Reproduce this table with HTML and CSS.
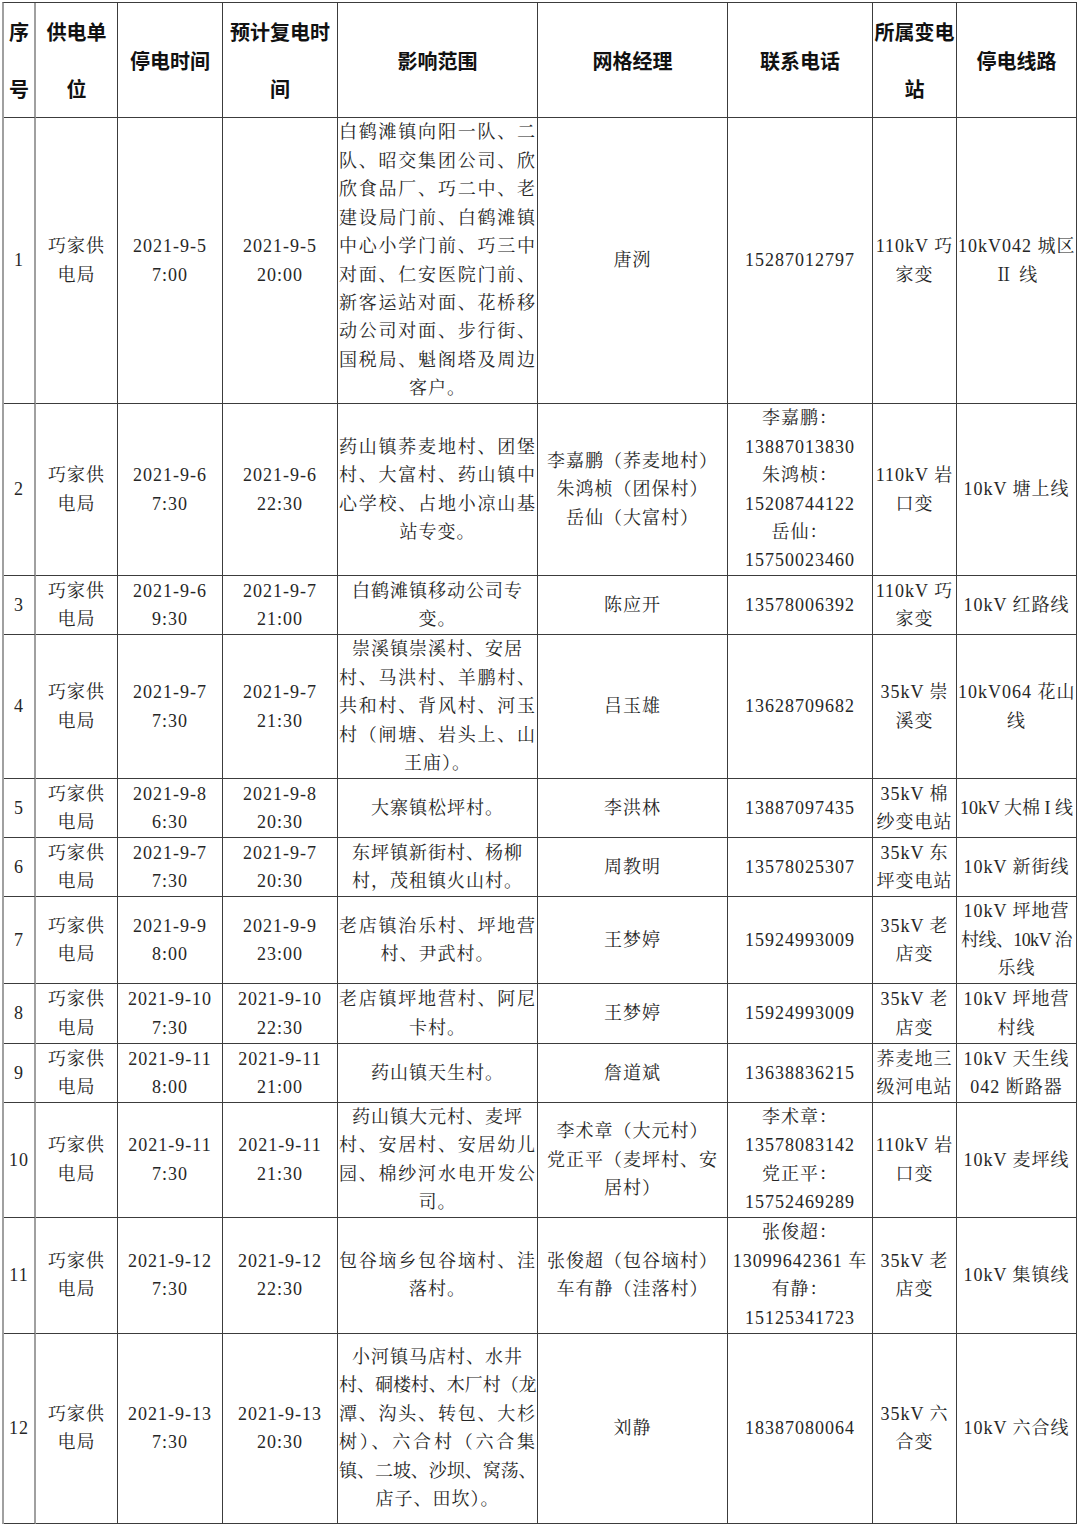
FILE: index.html
```html
<!DOCTYPE html>
<html lang="zh-CN">
<head>
<meta charset="utf-8">
<title>停电计划</title>
<link rel="stylesheet" href="styles.css">
</head>
<body>
<table class="grid">
  <thead>
    <tr class="rh">
      <th class="w1"><span class="l">序</span><span class="l">号</span></th>
      <th class="w2"><span class="l">供电单</span><span class="l">位</span></th>
      <th class="w3"><span class="l">停电时间</span></th>
      <th class="w4"><span class="l">预计复电时</span><span class="l">间</span></th>
      <th class="w5"><span class="l">影响范围</span></th>
      <th class="w6"><span class="l">网格经理</span></th>
      <th class="w7"><span class="l">联系电话</span></th>
      <th class="w8"><span class="l">所属变电</span><span class="l">站</span></th>
      <th class="w9"><span class="l">停电线路</span></th>
    </tr>
  </thead>
  <tbody>
    <tr class="r1">
      <td><span class="l">1</span></td>
      <td><span class="l">巧家供</span><span class="l">电局</span></td>
      <td class="dt"><span class="l">2021-9-5</span><span class="l">7:00</span></td>
      <td class="dt"><span class="l">2021-9-5</span><span class="l">20:00</span></td>
      <td class="area">
        <span class="l j">白鹤滩镇向阳一队、二</span>
        <span class="l j">队、昭交集团公司、欣</span>
        <span class="l j">欣食品厂、巧二中、老</span>
        <span class="l j">建设局门前、白鹤滩镇</span>
        <span class="l j">中心小学门前、巧三中</span>
        <span class="l j">对面、仁安医院门前、</span>
        <span class="l j">新客运站对面、花桥移</span>
        <span class="l j">动公司对面、步行街、</span>
        <span class="l j">国税局、魁阁塔及周边</span>
        <span class="l">客户。</span>
      </td>
      <td><span class="l">唐洌</span></td>
      <td class="ph"><span class="l">15287012797</span></td>
      <td><span class="l">110kV 巧</span><span class="l">家变</span></td>
      <td class="line"><span class="l">10kV042 城区</span><span class="l">Ⅱ 线</span></td>
    </tr>
    <tr class="r2">
      <td><span class="l">2</span></td>
      <td><span class="l">巧家供</span><span class="l">电局</span></td>
      <td class="dt"><span class="l">2021-9-6</span><span class="l">7:30</span></td>
      <td class="dt"><span class="l">2021-9-6</span><span class="l">22:30</span></td>
      <td class="area">
        <span class="l j">药山镇荞麦地村、团堡</span>
        <span class="l j">村、大富村、药山镇中</span>
        <span class="l j">心学校、占地小凉山基</span>
        <span class="l">站专变。</span>
      </td>
      <td><span class="l">李嘉鹏（荞麦地村）</span><span class="l">朱鸿桢（团保村）</span><span class="l">岳仙（大富村）</span></td>
      <td class="ph"><span class="l">李嘉鹏：</span><span class="l">13887013830</span><span class="l">朱鸿桢：</span><span class="l">15208744122</span><span class="l">岳仙：</span><span class="l">15750023460</span></td>
      <td><span class="l">110kV 岩</span><span class="l">口变</span></td>
      <td class="line"><span class="l">10kV 塘上线</span></td>
    </tr>
    <tr class="r3">
      <td><span class="l">3</span></td>
      <td><span class="l">巧家供</span><span class="l">电局</span></td>
      <td class="dt"><span class="l">2021-9-6</span><span class="l">9:30</span></td>
      <td class="dt"><span class="l">2021-9-7</span><span class="l">21:00</span></td>
      <td class="area"><span class="l">白鹤滩镇移动公司专</span><span class="l">变。</span></td>
      <td><span class="l">陈应开</span></td>
      <td class="ph"><span class="l">13578006392</span></td>
      <td><span class="l">110kV 巧</span><span class="l">家变</span></td>
      <td class="line"><span class="l">10kV 红路线</span></td>
    </tr>
    <tr class="r4">
      <td><span class="l">4</span></td>
      <td><span class="l">巧家供</span><span class="l">电局</span></td>
      <td class="dt"><span class="l">2021-9-7</span><span class="l">7:30</span></td>
      <td class="dt"><span class="l">2021-9-7</span><span class="l">21:30</span></td>
      <td class="area">
        <span class="l">崇溪镇崇溪村、安居</span>
        <span class="l j">村、马洪村、羊鹏村、</span>
        <span class="l j">共和村、背风村、河玉</span>
        <span class="l j">村（闸塘、岩头上、山</span>
        <span class="l">王庙）。</span>
      </td>
      <td><span class="l">吕玉雄</span></td>
      <td class="ph"><span class="l">13628709682</span></td>
      <td><span class="l">35kV 崇</span><span class="l">溪变</span></td>
      <td class="line"><span class="l">10kV064 花山</span><span class="l">线</span></td>
    </tr>
    <tr class="r5">
      <td><span class="l">5</span></td>
      <td><span class="l">巧家供</span><span class="l">电局</span></td>
      <td class="dt"><span class="l">2021-9-8</span><span class="l">6:30</span></td>
      <td class="dt"><span class="l">2021-9-8</span><span class="l">20:30</span></td>
      <td class="area"><span class="l">大寨镇松坪村。</span></td>
      <td><span class="l">李洪林</span></td>
      <td class="ph"><span class="l">13887097435</span></td>
      <td><span class="l">35kV 棉</span><span class="l">纱变电站</span></td>
      <td class="line"><span class="l t0">10kV 大棉 I 线</span></td>
    </tr>
    <tr class="r6">
      <td><span class="l">6</span></td>
      <td><span class="l">巧家供</span><span class="l">电局</span></td>
      <td class="dt"><span class="l">2021-9-7</span><span class="l">7:30</span></td>
      <td class="dt"><span class="l">2021-9-7</span><span class="l">20:30</span></td>
      <td class="area"><span class="l">东坪镇新街村、杨柳</span><span class="l">村，茂租镇火山村。</span></td>
      <td><span class="l">周教明</span></td>
      <td class="ph"><span class="l">13578025307</span></td>
      <td><span class="l">35kV 东</span><span class="l">坪变电站</span></td>
      <td class="line"><span class="l">10kV 新街线</span></td>
    </tr>
    <tr class="r7">
      <td><span class="l">7</span></td>
      <td><span class="l">巧家供</span><span class="l">电局</span></td>
      <td class="dt"><span class="l">2021-9-9</span><span class="l">8:00</span></td>
      <td class="dt"><span class="l">2021-9-9</span><span class="l">23:00</span></td>
      <td class="area"><span class="l j">老店镇治乐村、坪地营</span><span class="l">村、尹武村。</span></td>
      <td><span class="l">王梦婷</span></td>
      <td class="ph"><span class="l">15924993009</span></td>
      <td><span class="l">35kV 老</span><span class="l">店变</span></td>
      <td class="line"><span class="l">10kV 坪地营</span><span class="l tn">村线、10kV 治</span><span class="l">乐线</span></td>
    </tr>
    <tr class="r8">
      <td><span class="l">8</span></td>
      <td><span class="l">巧家供</span><span class="l">电局</span></td>
      <td class="dt"><span class="l">2021-9-10</span><span class="l">7:30</span></td>
      <td class="dt"><span class="l">2021-9-10</span><span class="l">22:30</span></td>
      <td class="area"><span class="l j">老店镇坪地营村、阿尼</span><span class="l">卡村。</span></td>
      <td><span class="l">王梦婷</span></td>
      <td class="ph"><span class="l">15924993009</span></td>
      <td><span class="l">35kV 老</span><span class="l">店变</span></td>
      <td class="line"><span class="l">10kV 坪地营</span><span class="l">村线</span></td>
    </tr>
    <tr class="r9">
      <td><span class="l">9</span></td>
      <td><span class="l">巧家供</span><span class="l">电局</span></td>
      <td class="dt"><span class="l">2021-9-11</span><span class="l">8:00</span></td>
      <td class="dt"><span class="l">2021-9-11</span><span class="l">21:00</span></td>
      <td class="area"><span class="l">药山镇天生村。</span></td>
      <td><span class="l">詹道斌</span></td>
      <td class="ph"><span class="l">13638836215</span></td>
      <td><span class="l">荞麦地三</span><span class="l">级河电站</span></td>
      <td class="line"><span class="l">10kV 天生线</span><span class="l">042 断路器</span></td>
    </tr>
    <tr class="r10">
      <td><span class="l">10</span></td>
      <td><span class="l">巧家供</span><span class="l">电局</span></td>
      <td class="dt"><span class="l">2021-9-11</span><span class="l">7:30</span></td>
      <td class="dt"><span class="l">2021-9-11</span><span class="l">21:30</span></td>
      <td class="area">
        <span class="l">药山镇大元村、麦坪</span>
        <span class="l j">村、安居村、安居幼儿</span>
        <span class="l j">园、棉纱河水电开发公</span>
        <span class="l">司。</span>
      </td>
      <td><span class="l">李术章（大元村）</span><span class="l">党正平（麦坪村、安</span><span class="l">居村）</span></td>
      <td class="ph"><span class="l">李术章：</span><span class="l">13578083142</span><span class="l">党正平：</span><span class="l">15752469289</span></td>
      <td><span class="l">110kV 岩</span><span class="l">口变</span></td>
      <td class="line"><span class="l">10kV 麦坪线</span></td>
    </tr>
    <tr class="r11">
      <td><span class="l">11</span></td>
      <td><span class="l">巧家供</span><span class="l">电局</span></td>
      <td class="dt"><span class="l">2021-9-12</span><span class="l">7:30</span></td>
      <td class="dt"><span class="l">2021-9-12</span><span class="l">22:30</span></td>
      <td class="area"><span class="l j">包谷垴乡包谷垴村、洼</span><span class="l">落村。</span></td>
      <td><span class="l">张俊超（包谷垴村）</span><span class="l">车有静（洼落村）</span></td>
      <td class="ph"><span class="l">张俊超：</span><span class="l">13099642361 车</span><span class="l">有静：</span><span class="l">15125341723</span></td>
      <td><span class="l">35kV 老</span><span class="l">店变</span></td>
      <td class="line"><span class="l">10kV 集镇线</span></td>
    </tr>
    <tr class="r12">
      <td><span class="l">12</span></td>
      <td><span class="l">巧家供</span><span class="l">电局</span></td>
      <td class="dt"><span class="l">2021-9-13</span><span class="l">7:30</span></td>
      <td class="dt"><span class="l">2021-9-13</span><span class="l">20:30</span></td>
      <td class="area">
        <span class="l">小河镇马店村、水井</span>
        <span class="l j tn">村、硐楼村、木厂村（龙</span>
        <span class="l j">潭、沟头、转包、大杉</span>
        <span class="l j">树）、六合村（六合集</span>
        <span class="l j tn">镇、二坡、沙坝、窝荡、</span>
        <span class="l">店子、田坎）。</span>
      </td>
      <td><span class="l">刘静</span></td>
      <td class="ph"><span class="l">18387080064</span></td>
      <td><span class="l">35kV 六</span><span class="l">合变</span></td>
      <td class="line"><span class="l">10kV 六合线</span></td>
    </tr>
  </tbody>
</table>
</body>
</html>
```

FILE: styles.css
```css
html, body {
  margin: 0;
  padding: 0;
  background: #ffffff;
}

body {
  padding: 2px 0 0 2px;
}

.grid {
  border-collapse: separate;
  border-spacing: 0;
  table-layout: fixed;
  width: 1073px;
  border-top: 1px solid #3c3c3c;
  border-left: 2px solid #a0a0a0;
  font-family: "Liberation Serif", "Noto Serif CJK SC", "Noto Sans CJK SC", serif;
  font-size: 18px;
  color: #262626;
}

.grid th,
.grid td {
  box-sizing: border-box;
  border-right: 1px solid #3c3c3c;
  border-bottom: 1px solid #3c3c3c;
  padding: 0 1px;
  text-align: center;
  vertical-align: middle;
  line-height: 28.4px;
  letter-spacing: 1px;
  white-space: nowrap;
  overflow: visible;
}

.grid th:first-child,
.grid td:first-child {
  border-right: 2px solid #a0a0a0;
}

.grid th {
  font-family: "Noto Sans CJK SC", "Liberation Sans", sans-serif;
  font-weight: 700;
  font-size: 20px;
  line-height: 57px;
  letter-spacing: 0;
  color: #111111;
}

.l {
  display: block;
}

.j {
  text-align: justify;
  text-align-last: justify;
}

.tn {
  letter-spacing: -0.6px;
}

.t0 {
  letter-spacing: 0;
}

.dt {
  letter-spacing: 2px;
}

.line {
  letter-spacing: 0.5px;
}

.area {
  padding: 0 3px 0 3px;
}

.w1 { width: 32px; }
.w2 { width: 82px; }
.w3 { width: 105px; }
.w4 { width: 115px; }
.w5 { width: 200px; }
.w6 { width: 190px; }
.w7 { width: 145px; }
.w8 { width: 84px; }
.w9 { width: 120px; }

.rh > th { height: 114px; }
.r1 > td { height: 286px; }
.r2 > td { height: 172px; }
.r3 > td { height: 59px; }
.r4 > td { height: 144px; }
.r5 > td { height: 59px; }
.r6 > td { height: 59px; }
.r7 > td { height: 87px; }
.r8 > td { height: 60px; }
.r9 > td { height: 59px; }
.r10 > td { height: 114px; }
.r11 > td { height: 116px; }
.r12 > td { height: 190px; }
```
